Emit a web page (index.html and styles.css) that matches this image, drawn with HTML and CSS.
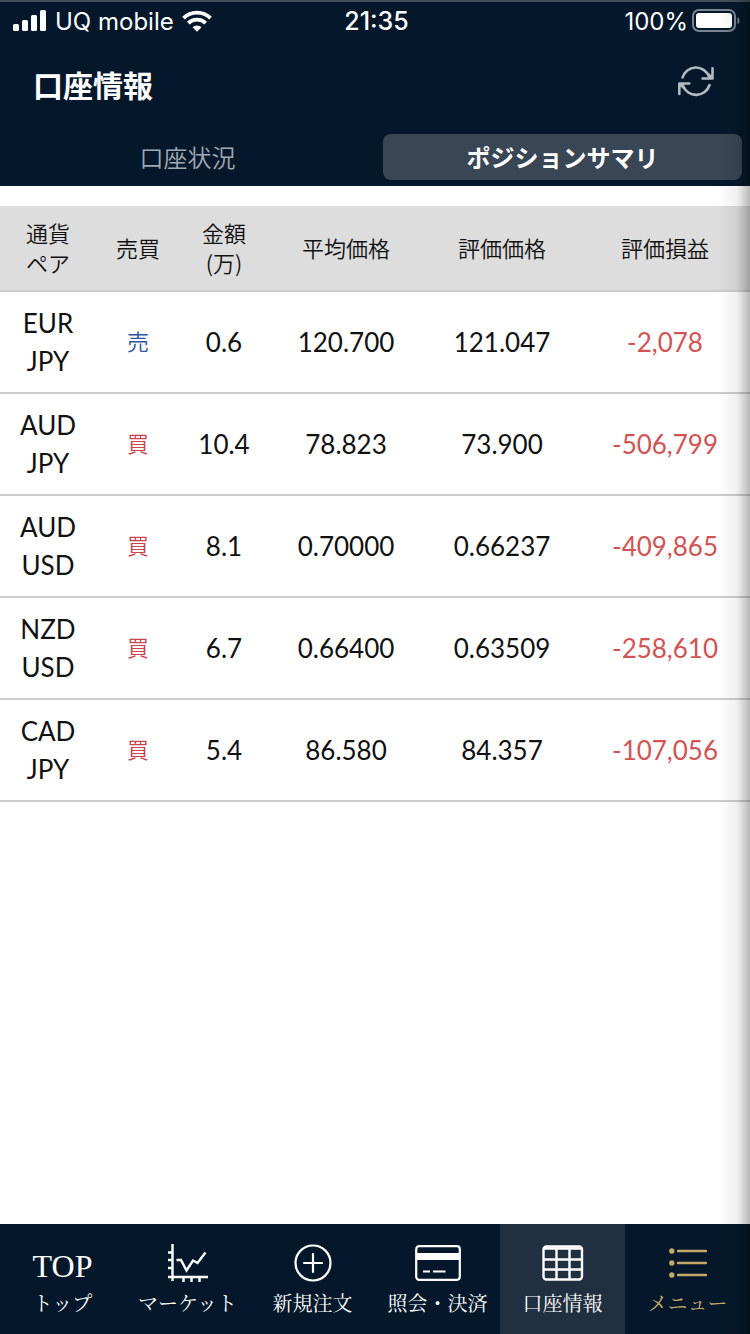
FILE: index.html
```html
<!DOCTYPE html>
<html lang="ja">
<head>
    <meta charset="UTF-8">
    <meta name="viewport" content="width=device-width, initial-scale=1.0">
    <title>口座情報</title>
    <link rel="stylesheet" href="styles.css">
</head>
<body>
    <header class="header">
        <div class="status-bar">
            <div class="status-left">
                <svg width="34" height="22" viewBox="0 0 34 22" fill="#fff">
                    <rect x="0" y="14" width="6" height="7" rx="1.5"/>
                    <rect x="9" y="10" width="6" height="11" rx="1.5"/>
                    <rect x="18" y="5" width="6" height="16" rx="1.5"/>
                    <rect x="27" y="0" width="6" height="21" rx="1.5"/>
                </svg>
                <span>UQ mobile</span>
                <svg width="30" height="22" viewBox="0 0 30 22" fill="none" stroke="#fff" stroke-width="3.8">
                    <path d="M1.5 8.2a19 19 0 0 1 27 0"/>
                    <path d="M6.3 13.2a12.4 12.4 0 0 1 17.4 0"/>
                    <path d="M15 21.8l-4.5-4.5a6.4 6.4 0 0 1 9 0z" fill="#fff" stroke="none"/>
                </svg>
            </div>
            <span class="clock">21:35</span>
            <div class="status-right">
                <span>100%</span>
                <svg width="48" height="24" viewBox="0 0 48 24">
                    <rect x="1" y="1" width="42" height="21" rx="6" fill="none" stroke="#7b8592" stroke-width="2"/>
                    <rect x="4" y="4" width="36" height="15" rx="3" fill="#fff"/>
                    <path d="M45.5 8v7.5q2-1.2 2-3.7t-2-3.8z" fill="#7b8592"/>
                </svg>
            </div>
        </div>
        <div class="title-bar">
            <h1>口座情報</h1>
            <button class="refresh" type="button" aria-label="更新">
                <svg width="38" height="32" viewBox="0 0 38 32" fill="none" stroke="#b4bac4" stroke-width="2.6" stroke-linecap="round" stroke-linejoin="round">
                    <path d="M5.5 12.5a14 14 0 0 1 26.5-1M35.5 3.2v10.3H25.5M35 13l-4-4"/>
                    <path d="M32.5 20a14 14 0 0 1-26.5 0.8M2.3 29V18.5h10M3 19l4 4"/>
                </svg>
            </button>
        </div>
        <div class="tabs">
            <button class="tab" type="button">口座状況</button>
            <button class="tab active" type="button">ポジションサマリ</button>
        </div>
    </header>

    <main class="content">
        <table class="positions">
            <thead>
                <tr>
                    <th class="col-pair">通貨<br>ペア</th>
                    <th class="col-side">売買</th>
                    <th class="col-amount">金額<br>(万)</th>
                    <th>平均価格</th>
                    <th>評価価格</th>
                    <th class="col-profit">評価損益</th>
                </tr>
            </thead>
            <tbody>
                <tr>
                    <td>EUR<br>JPY</td>
                    <td class="side sell">売</td>
                    <td>0.6</td>
                    <td>120.700</td>
                    <td>121.047</td>
                    <td class="minus">-2,078</td>
                </tr>
                <tr>
                    <td>AUD<br>JPY</td>
                    <td class="side buy">買</td>
                    <td>10.4</td>
                    <td>78.823</td>
                    <td>73.900</td>
                    <td class="minus">-506,799</td>
                </tr>
                <tr>
                    <td>AUD<br>USD</td>
                    <td class="side buy">買</td>
                    <td>8.1</td>
                    <td>0.70000</td>
                    <td>0.66237</td>
                    <td class="minus">-409,865</td>
                </tr>
                <tr>
                    <td>NZD<br>USD</td>
                    <td class="side buy">買</td>
                    <td>6.7</td>
                    <td>0.66400</td>
                    <td>0.63509</td>
                    <td class="minus">-258,610</td>
                </tr>
                <tr>
                    <td>CAD<br>JPY</td>
                    <td class="side buy">買</td>
                    <td>5.4</td>
                    <td>86.580</td>
                    <td>84.357</td>
                    <td class="minus">-107,056</td>
                </tr>
            </tbody>
        </table>
    </main>

    <nav class="bottom-nav">
        <a class="nav-item" href="#">
            <span class="nav-icon nav-top">TOP</span>
            <span>トップ</span>
        </a>
        <a class="nav-item" href="#">
            <span class="nav-icon">
                <svg width="40" height="38" viewBox="0 0 40 38" fill="none" stroke="#fff" stroke-width="2.4">
                    <path d="M4.5 0v37M0 33h40M0 8.5h4M0 16h4M0 24h4M15.5 33v5M23.5 33v5M31.5 33v5"/>
                    <path d="M8.5 16h4.5l5.5 10.5 6.5-10 4.5 2.5 8-10.5"/>
                </svg>
            </span>
            <span>マーケット</span>
        </a>
        <a class="nav-item" href="#">
            <span class="nav-icon">
                <svg width="38" height="38" viewBox="0 0 38 38" fill="none" stroke="#fff" stroke-width="2.2" stroke-linecap="round">
                    <circle cx="19" cy="19" r="17.5"/>
                    <path d="M19 10v18M10 19h18"/>
                </svg>
            </span>
            <span>新規注文</span>
        </a>
        <a class="nav-item" href="#">
            <span class="nav-icon">
                <svg width="46" height="36" viewBox="0 0 46 36" fill="none" stroke="#fff" stroke-width="2.2">
                    <rect x="1.2" y="1.2" width="43.6" height="33.6" rx="3"/>
                    <path d="M1 8h44v7H1z" fill="#fff" stroke="none"/>
                    <path d="M8 26.5h7M18 26.5h12.5"/>
                </svg>
            </span>
            <span>照会・決済</span>
        </a>
        <a class="nav-item active" href="#">
            <span class="nav-icon">
                <svg width="42" height="36" viewBox="0 0 42 36" fill="none" stroke="#fff" stroke-width="2.4">
                    <rect x="1.5" y="1.5" width="38.5" height="33" rx="3"/>
                    <path d="M2 3.5h38M2 14.5h38M2 24.5h38M14.5 3v31M27.5 3v31"/>
                </svg>
            </span>
            <span>口座情報</span>
        </a>
        <a class="nav-item menu" href="#">
            <span class="nav-icon">
                <svg width="38" height="32" viewBox="0 0 38 32" fill="#c4a769">
                    <circle cx="2.8" cy="4" r="2.7"/>
                    <circle cx="2.8" cy="16" r="2.7"/>
                    <circle cx="2.8" cy="28" r="2.7"/>
                    <path d="M9 4h28M9 16h28M9 28h28" stroke="#c4a769" stroke-width="2.4" stroke-linecap="round"/>
                </svg>
            </span>
            <span>メニュー</span>
        </a>
    </nav>
    <div class="edge-shadow"></div>
</body>
</html>
```
FILE: styles.css
```css
* {
    box-sizing: border-box;
}

body {
    margin: 0;
    min-height: 100vh;
    display: flex;
    flex-direction: column;
    position: relative;
    background: #fff;
    color: #111;
    font-family: Lato, 'Noto Sans CJK JP', sans-serif;
}

button {
    border: none;
    background: none;
    padding: 0;
    font-family: inherit;
    cursor: pointer;
}

svg {
    display: block;
}

.header {
    background: #05182b;
    border-top: 2px solid #3f4d5c;
    color: #fff;
    padding-bottom: 6px;
}

.status-bar {
    display: flex;
    align-items: center;
    height: 38px;
    padding: 0 10px 0 13px;
    font-family: Inter, sans-serif;
    font-size: 24px;
}

.status-left,
.status-right {
    flex: 1;
    display: flex;
    align-items: center;
    gap: 8px;
}

.status-right {
    justify-content: flex-end;
    gap: 4px;
}

.clock {
    font-weight: 500;
    font-size: 25px;
}

.title-bar {
    display: flex;
    justify-content: space-between;
    align-items: center;
    height: 94px;
    padding: 0 35px 0 33px;
}

h1 {
    margin: 0;
    padding-bottom: 6px;
    font-family: 'Noto Sans CJK JP', sans-serif;
    font-size: 30px;
    font-weight: 700;
}

.refresh {
    padding-bottom: 12px;
}

.tabs {
    display: flex;
    gap: 16px;
    padding: 0 8px;
}

.tab {
    flex: 1;
    height: 46px;
    padding-bottom: 2px;
    border-radius: 8px;
    font-family: 'Noto Sans CJK JP', sans-serif;
    font-size: 24px;
    font-weight: 350;
    color: #a0a8b1;
}

.tab.active {
    background: #384655;
    color: #fff;
    font-weight: 700;
}

.content {
    flex: 1;
    padding-top: 20px;
}

.positions {
    width: 100%;
    table-layout: fixed;
    border-spacing: 0;
    text-align: center;
}

.positions th,
.positions td {
    padding: 12px 0;
    border-bottom: 2px solid #ccc;
}

.positions th {
    background: #ddd;
    font-family: 'Noto Sans CJK JP', sans-serif;
    font-size: 22px;
    font-weight: 350;
    line-height: 30px;
    padding: 11px 0 13px;
}

.positions td {
    font-size: 26px;
    line-height: 38px;
}

/* the two price columns share what is left */
.col-pair { width: 96px; }
.col-side { width: 84px; }
.col-amount { width: 88px; }
.col-profit { width: 170px; }

.positions .side {
    padding: 10px 0 14px;
    font-family: 'Noto Sans CJK JP', sans-serif;
    font-size: 22px;
    font-weight: 350;
}

.positions .sell { color: #2f559f; }
.positions .buy { color: #c9444c; }
.positions .minus { color: #d15454; }

.bottom-nav {
    display: flex;
    height: 110px;
    background: #05182b;
}

.nav-item {
    flex: 1 1 0;
    display: flex;
    flex-direction: column;
    align-items: center;
    padding-top: 18px;
    color: #fff;
    font-family: 'Noto Serif CJK JP', 'Liberation Serif', 'Noto Sans CJK JP', serif;
    font-size: 20px;
    font-weight: 400;
    line-height: 30px;
    text-decoration: none;
    white-space: nowrap;
}

.nav-item.active {
    background: #203040;
}

.nav-item.menu {
    color: #c4a769;
}

.nav-icon {
    display: flex;
    align-items: center;
    justify-content: center;
    height: 42px;
    margin-bottom: 4px;
}

.nav-top {
    padding-top: 6px;
    font-family: 'Liberation Serif', serif;
    font-size: 32px;
}

/* shadow of the page lying over the right edge */
.edge-shadow {
    position: absolute;
    top: 0;
    right: 0;
    bottom: 0;
    width: 32px;
    background: linear-gradient(to right, rgba(0, 0, 0, 0), rgba(0, 0, 0, 0.06) 60%, rgba(0, 0, 0, 0.28));
    pointer-events: none;
}
```
